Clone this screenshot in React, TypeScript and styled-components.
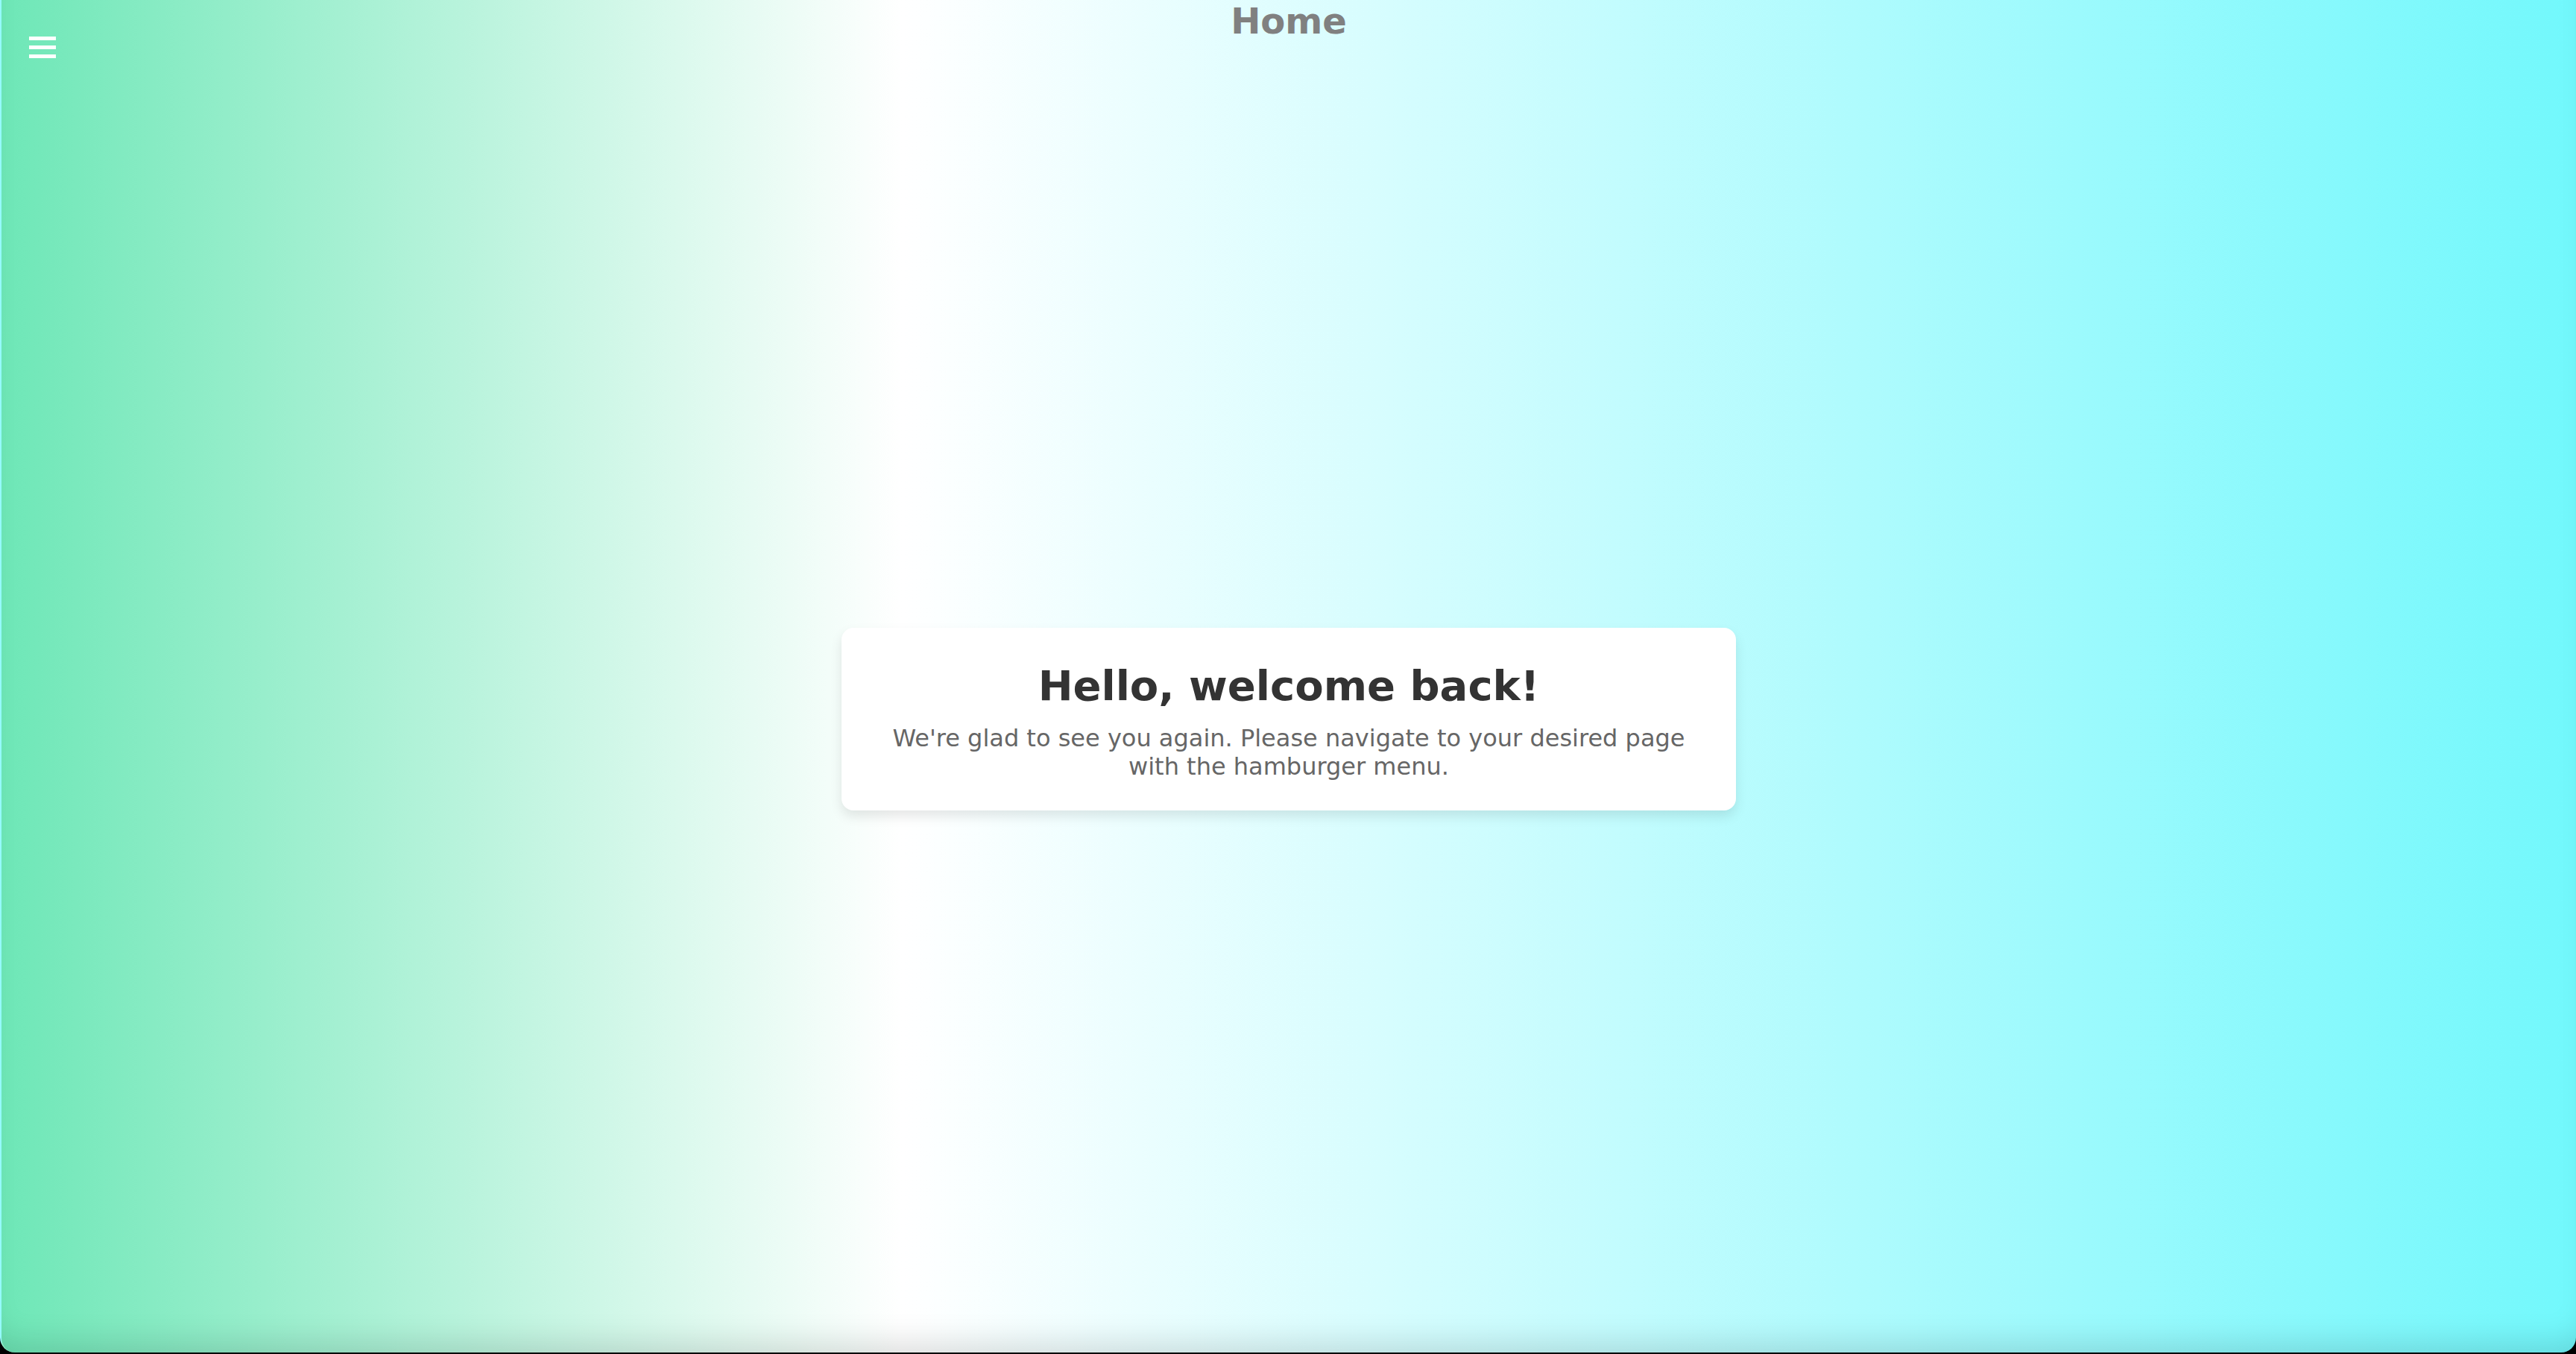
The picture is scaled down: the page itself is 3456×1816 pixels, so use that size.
import styled, { createGlobalStyle } from "styled-components";

const GlobalStyle = createGlobalStyle`
  html, body {
    margin: 0;
    padding: 0;
    background: #000;
  }
  body {
    font-family: "DejaVu Sans", Verdana, sans-serif;
  }
`;

const Page = styled.div`
  height: 1814px;
  display: flex;
  flex-direction: column;
  border-radius: 0 0 20px 20px;
  overflow: hidden;
  background: linear-gradient(
    to right,
    #6ee7b7 0%,
    #ffffff 35%,
    #72f8fc 100%
  );
  border-left: 2px solid rgba(255, 255, 255, 0.25);
  box-sizing: border-box;
  box-shadow: inset 0 -34px 40px -20px rgba(0, 0, 0, 0.13);
`;

const Header = styled.header`
  display: grid;
  grid-template-columns: 1fr auto 1fr;
  align-items: start;
  height: 115px;
`;

const MenuButton = styled.button`
  display: flex;
  flex-direction: column;
  gap: 7px;
  width: fit-content;
  margin: 49px 0 0 37px;
  padding: 0;
  border: none;
  background: none;
  cursor: pointer;
`;

const MenuBar = styled.span`
  display: block;
  width: 36px;
  height: 5px;
  background: #fff;
`;

const Title = styled.h1`
  margin: 0;
  font-size: 48px;
  font-weight: bold;
  line-height: normal;
  color: #808080;
`;

const Main = styled.main`
  flex: 1;
  display: flex;
  align-items: center;
  justify-content: center;
`;

const Card = styled.section`
  width: 1200px;
  box-sizing: border-box;
  padding: 45px 40px 40px;
  background: #fff;
  border-radius: 16px;
  box-shadow: 0 8px 16px rgba(0, 0, 0, 0.1);
  text-align: center;
`;

const Heading = styled.h2`
  margin: 0 0 19px;
  font-size: 56px;
  font-weight: bold;
  line-height: normal;
  color: #333;
`;

const Text = styled.p`
  margin: 0;
  font-size: 32px;
  line-height: 38px;
  color: #666;
`;

export default function App() {
  return (
    <>
      <GlobalStyle />
      <Page>
        <Header>
          <MenuButton aria-label="Open menu">
            <MenuBar />
            <MenuBar />
            <MenuBar />
          </MenuButton>
          <Title>Home</Title>
          <div />
        </Header>
        <Main>
          <Card>
            <Heading>Hello, welcome back!</Heading>
            <Text>
              We're glad to see you again. Please navigate to your desired page
              with the hamburger menu.
            </Text>
          </Card>
        </Main>
      </Page>
    </>
  );
}
